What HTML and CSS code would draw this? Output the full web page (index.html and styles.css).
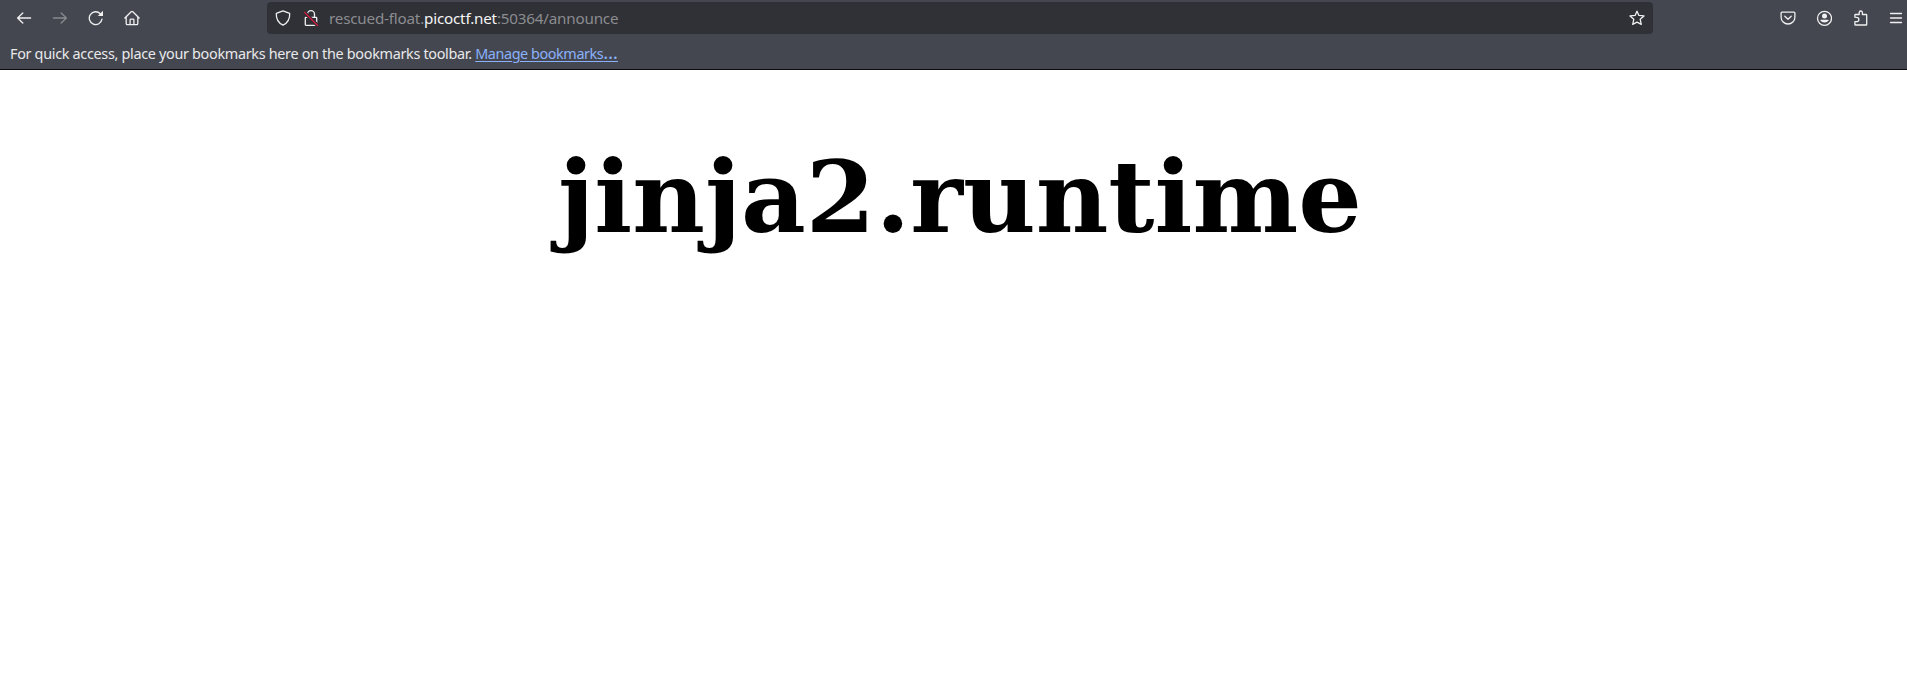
FILE: index.html
```html
<!DOCTYPE html>
<html lang="en">
<head>
<meta charset="utf-8">
<title>announce</title>
<link rel="stylesheet" href="styles.css">
</head>
<body>
<header class="chrome">
  <div class="nav">
    <div class="nav-buttons">
      <svg class="icon" viewBox="0 0 16 16"><path d="M14.600 8H1.800M6.800 3 1.600 8l5.200 5"/></svg>
      <svg class="icon disabled" viewBox="0 0 16 16"><path d="M1.400 8h12.800M9.200 3l5.200 5-5.200 5"/></svg>
      <svg class="icon" viewBox="0 0 16 16"><path d="M14 9.200A6.400 6.400 0 1 1 12.300 3.700"/><path class="solid" d="M15 .800V6H9.800z"/></svg>
      <svg class="icon" viewBox="0 0 16 16"><path d="M.900 8 7.200 1.700q.8-.7 1.600 0L15.100 8M2.200 7v6.500q0 1.200 1.200 1.200h9.200q1.200 0 1.200-1.200V7M6.100 14.500V10q0-.8.8-.8h2.200q.8 0 .8.800v4.500"/></svg>
    </div>
    <div class="urlbar">
      <svg class="icon" viewBox="0 0 16 16"><path d="M8 .900 14.700 3.300C15 8.800 12.600 13 8 15.200 3.400 13 1 8.800 1.300 3.300z"/></svg>
      <svg class="icon lock" viewBox="0 0 16 16"><path d="M4.500 7V4.200a3.500 3.500 0 0 1 7 0V7M3 7.300h10q.7 0 .7.700v6.600q0 .7-.7.700H3q-.7 0-.7-.7V8q0-.7.7-.7z"/><path class="slash-gap" d="M1.600 2.400 14.800 15.600"/><path class="slash" d="M1.600 2.400 14.800 15.600"/></svg>
      <div class="url">rescued-float.<span class="domain">picoctf.net</span>:50364/announce</div>
      <svg class="icon" viewBox="0 0 16 16"><path d="M8 1.200 9.900 5.400 15 5.900 11.200 9.300 12.300 14.400 8 12.200 3.700 14.400 4.800 9.300 1 5.900 6.100 5.400z"/></svg>
    </div>
    <div class="tools">
      <svg class="icon" viewBox="0 0 16 16"><path d="M2 2.200h12q.9 0 .9.900v4.100a6.900 6.800 0 0 1-13.800 0V3.100q0-.9.9-.9zM4.800 6.200 8 9.200l3.200-3"/></svg>
      <svg class="icon" viewBox="0 0 16 16"><circle cx="8.500" cy="8.300" r="7"/><circle class="solid" cx="8.500" cy="6" r="2.500"/><path class="solid" d="M4.900 9.700h7.200q.7 0 .4.800a4.300 3.300 0 0 1-8 0q-.3-.8.4-.8z"/></svg>
      <svg class="icon" viewBox="0 0 16 16"><path d="M2.900 7.200V5.100q0-.6.6-.6h3.700V2.600a1.600 1.600 0 0 1 3.200 0v1.900h3.700q.6 0 .6.700v9.200q0 .6-.6.600H3.500q-.6 0-.6-.6v-2.800h1.800a2 2 0 0 0 0-4.300z"/></svg>
      <svg class="icon" viewBox="0 0 16 16"><path d="M2.500 3.500h11M2.500 8h11M2.500 12.500h11"/></svg>
    </div>
  </div>
  <div class="bookmarks"><span class="hint">For quick access, place your bookmarks here on the bookmarks toolbar.</span><a class="manage">Manage bookmarks<span class="dots">…</span></a></div>
</header>
<main class="page"><h1 class="title">jinja2.runtime</h1></main>
</body>
</html>
```
FILE: styles.css
```css
body {
  margin: 0;
  background: #fff;
  overflow: hidden;
}

.chrome {
  box-sizing: border-box;
  height: 70px;
  background: #44474f;
  border-bottom: 1px solid #0c0c0d;
  color: #e9e9eb;
  font-family: "Noto Sans", sans-serif;
}

.nav {
  display: flex;
  align-items: center;
  height: 32px;
  padding: 2px 3px 0 16px;
}

.nav-buttons,
.tools {
  display: flex;
  gap: 20px;
}

.icon {
  flex: none;
  width: 16px;
  height: 16px;
  fill: none;
  stroke: #f0f0f1;
  stroke-width: 1.3;
  stroke-linecap: round;
  stroke-linejoin: round;
}

.solid {
  fill: #f0f0f1;
  stroke: none;
}

.disabled {
  opacity: 0.4;
}

.urlbar {
  box-sizing: border-box;
  display: flex;
  align-items: center;
  width: 1386px;
  height: 32px;
  margin-left: 127px;
  padding: 0 8px;
  border-radius: 4px;
  background: #303136;
}

.lock {
  margin-left: 12px;
}

.slash-gap {
  stroke: #303136;
  stroke-width: 3.6;
}

.slash {
  stroke: #e2163f;
}

.url {
  flex: 1;
  margin-left: 10px;
  color: #8b8c90;
  font-size: 15.2px;
  letter-spacing: -0.19px;
  line-height: 32px;
  white-space: nowrap;
}

.domain {
  color: #f4f4f5;
}

.tools {
  margin-left: auto;
}

.bookmarks {
  display: flex;
  height: 35px;
  padding-left: 10px;
  font-size: 14.4px;
  letter-spacing: -0.31px;
  line-height: 39px;
  white-space: nowrap;
}

.manage {
  margin-left: 3.500px;
  color: #8ab1fb;
  letter-spacing: -0.42px;
  text-decoration: underline;
  text-underline-offset: 2px;
}

.dots {
  font-size: 18.500px;
  letter-spacing: 0;
  line-height: 1;
}

.page {
  padding: 69px 0 0 13px;
}

.title {
  margin: 0;
  font: bold 100px/1.17 "DejaVu Serif", serif;
  text-align: center;
}
```
